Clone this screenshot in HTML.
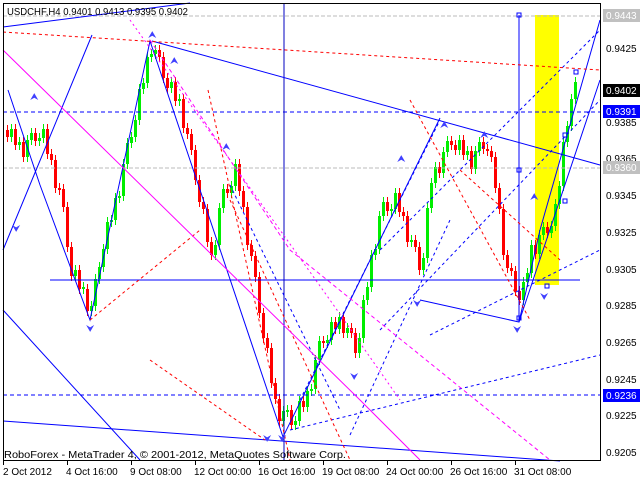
<!DOCTYPE html>
<html><head><meta charset="utf-8"><style>
html,body{margin:0;padding:0;background:#fff;width:640px;height:480px;overflow:hidden}
svg{display:block}
text{font-family:"Liberation Sans",sans-serif;font-size:10px}
</style></head><body>
<svg width="640" height="480" xmlns="http://www.w3.org/2000/svg">
<rect x="0" y="0" width="640" height="480" fill="#fff"/>
<rect x="535" y="15" width="24" height="270" fill="#ffff00"/>
<path fill="none" stroke="#00ee00" d="M11.5 124v18M19.5 137v13M27.5 135v27M31.5 128v17M39.5 133v13M43.5 124v19M75.5 265v16M83.5 282v12M91.5 301v15M95.5 274v37M99.5 262v22M103.5 244v28M107.5 217v37M111.5 215v12M115.5 193v32M119.5 191v12M123.5 159v42M127.5 138v31M131.5 132v16M135.5 115v27M139.5 84v41M143.5 78v16M147.5 52v36M151.5 49v13M155.5 45v14M171.5 77v16M179.5 94v12M215.5 240v20M219.5 203v47M223.5 184v29M231.5 181v17M235.5 159v32M283.5 406v20M287.5 405v12M295.5 416v14M299.5 396v30M307.5 386v26M311.5 384v12M315.5 355v39M319.5 336v29M327.5 335v13M331.5 317v28M339.5 312v22M347.5 323v15M359.5 333v25M363.5 295v48M367.5 282v23M371.5 250v42M375.5 244v16M379.5 211v43M383.5 197v24M391.5 204v12M395.5 188v26M411.5 235v12M423.5 253v22M427.5 203v60M431.5 178v35M435.5 162v26M443.5 147v31M447.5 136v21M459.5 135v20M467.5 146v14M475.5 146v28M479.5 137v19M523.5 277v28M527.5 268v19M531.5 240v38M539.5 230v29M543.5 222v18M551.5 221v17M555.5 199v32M559.5 181v28M563.5 137v54M567.5 121v26M571.5 94v37M575.5 77v27"/>
<path fill="#00ee00" d="M10 129h3v8h-3zM18 142h3v3h-3zM26 140h3v17h-3zM30 133h3v7h-3zM38 138h3v3h-3zM42 129h3v9h-3zM74 270h3v6h-3zM82 287h3v2h-3zM90 306h3v5h-3zM94 279h3v27h-3zM98 267h3v12h-3zM102 249h3v18h-3zM106 222h3v27h-3zM110 220h3v2h-3zM114 198h3v22h-3zM118 196h3v2h-3zM122 164h3v32h-3zM126 143h3v21h-3zM130 137h3v6h-3zM134 120h3v17h-3zM138 89h3v31h-3zM142 83h3v6h-3zM146 57h3v26h-3zM150 54h3v3h-3zM154 50h3v4h-3zM170 82h3v6h-3zM178 99h3v2h-3zM214 245h3v10h-3zM218 208h3v37h-3zM222 189h3v19h-3zM230 186h3v7h-3zM234 164h3v22h-3zM282 411h3v10h-3zM286 410h3v2h-3zM294 421h3v4h-3zM298 401h3v20h-3zM306 391h3v16h-3zM310 389h3v2h-3zM314 360h3v29h-3zM318 341h3v19h-3zM326 340h3v3h-3zM330 322h3v18h-3zM338 317h3v12h-3zM346 328h3v5h-3zM358 338h3v15h-3zM362 300h3v38h-3zM366 287h3v13h-3zM370 255h3v32h-3zM374 249h3v6h-3zM378 216h3v33h-3zM382 202h3v14h-3zM390 209h3v2h-3zM394 193h3v16h-3zM410 240h3v2h-3zM422 258h3v12h-3zM426 208h3v50h-3zM430 183h3v25h-3zM434 167h3v16h-3zM442 152h3v21h-3zM446 141h3v11h-3zM458 140h3v10h-3zM466 151h3v4h-3zM474 151h3v18h-3zM478 142h3v9h-3zM522 282h3v18h-3zM526 273h3v9h-3zM530 245h3v28h-3zM538 235h3v19h-3zM542 227h3v8h-3zM550 226h3v7h-3zM554 204h3v22h-3zM558 186h3v18h-3zM562 142h3v44h-3zM566 126h3v16h-3zM570 99h3v27h-3zM574 82h3v17h-3z"/>
<path fill="none" stroke="#ff0000" d="M7.5 125v17M15.5 124v26M23.5 137v25M35.5 128v18M47.5 124v35M51.5 149v16M55.5 155v38M59.5 183v12M63.5 184v28M67.5 202v50M71.5 242v39M79.5 265v29M87.5 284v32M159.5 45v17M163.5 52v31M167.5 73v20M175.5 77v29M183.5 94v39M187.5 123v16M191.5 129v26M195.5 145v40M199.5 175v32M203.5 197v17M207.5 204v43M211.5 237v23M227.5 184v14M239.5 159v37M243.5 186v26M247.5 202v48M251.5 240v21M255.5 251v31M259.5 272v46M263.5 308v35M267.5 333v20M271.5 343v45M275.5 378v26M279.5 394v32M291.5 405v25M303.5 396v16M323.5 336v12M335.5 317v17M343.5 312v26M351.5 323v15M355.5 328v30M387.5 197v19M399.5 188v29M403.5 207v14M407.5 211v36M415.5 235v17M419.5 242v33M439.5 162v16M451.5 136v14M455.5 140v15M463.5 135v25M471.5 146v28M483.5 137v17M487.5 144v12M491.5 146v16M495.5 152v41M499.5 183v31M503.5 204v56M507.5 250v23M511.5 263v13M515.5 266v30M519.5 286v19M535.5 240v19M547.5 222v16"/>
<path fill="#ff0000" d="M6 130h3v7h-3zM14 129h3v16h-3zM22 142h3v15h-3zM34 133h3v8h-3zM46 129h3v25h-3zM50 154h3v6h-3zM54 160h3v28h-3zM58 188h3v2h-3zM62 189h3v18h-3zM66 207h3v40h-3zM70 247h3v29h-3zM78 270h3v19h-3zM86 289h3v22h-3zM158 50h3v7h-3zM162 57h3v21h-3zM166 78h3v10h-3zM174 82h3v19h-3zM182 99h3v29h-3zM186 128h3v6h-3zM190 134h3v16h-3zM194 150h3v30h-3zM198 180h3v22h-3zM202 202h3v7h-3zM206 209h3v33h-3zM210 242h3v13h-3zM226 189h3v4h-3zM238 164h3v27h-3zM242 191h3v16h-3zM246 207h3v38h-3zM250 245h3v11h-3zM254 256h3v21h-3zM258 277h3v36h-3zM262 313h3v25h-3zM266 338h3v10h-3zM270 348h3v35h-3zM274 383h3v16h-3zM278 399h3v22h-3zM290 410h3v15h-3zM302 401h3v6h-3zM322 341h3v2h-3zM334 322h3v7h-3zM342 317h3v16h-3zM350 328h3v5h-3zM354 333h3v20h-3zM386 202h3v9h-3zM398 193h3v19h-3zM402 212h3v4h-3zM406 216h3v26h-3zM414 240h3v7h-3zM418 247h3v23h-3zM438 167h3v6h-3zM450 141h3v4h-3zM454 145h3v5h-3zM462 140h3v15h-3zM470 151h3v18h-3zM482 142h3v7h-3zM486 149h3v2h-3zM490 151h3v6h-3zM494 157h3v31h-3zM498 188h3v21h-3zM502 209h3v46h-3zM506 255h3v13h-3zM510 268h3v3h-3zM514 271h3v20h-3zM518 291h3v9h-3zM534 245h3v9h-3zM546 227h3v6h-3z"/>
<g fill="none" stroke-width="1">
<line x1="3" y1="16" x2="600" y2="16" stroke="#bbb" stroke-dasharray="4,2"/>
<line x1="3" y1="168" x2="600" y2="168" stroke="#bbb" stroke-dasharray="4,2"/>
<line x1="3" y1="112" x2="600" y2="112" stroke="#0000ff" stroke-dasharray="4,3"/>
<line x1="3" y1="395" x2="600" y2="395" stroke="#0000ff" stroke-dasharray="4,3"/>
<line x1="50" y1="280" x2="580" y2="280" stroke="#0000ff"/>
<line x1="284" y1="3" x2="284" y2="460" stroke="#0000c0"/>
<line x1="519" y1="15" x2="519" y2="322" stroke="#0000ff"/>
<polyline points="3,27 190,3" stroke="#0000ff"/>
<polyline points="152,41 600,165" stroke="#0000ff"/>
<polyline points="3,421 560,461" stroke="#0000ff"/>
<polyline points="8,90 40,185 90,320 150,41 283,437 440,118" stroke="#0000ff"/>
<polyline points="3,250 92,35" stroke="#0000ff"/>
<polyline points="3,310 140,460" stroke="#0000ff"/>
<polyline points="420,300 519,322 540,230 600,20" stroke="#0000ff"/>
<polyline points="519,322 600,80" stroke="#0000ff"/>
<polyline points="300,400 440,120" stroke="#0000ff" stroke-dasharray="3,3"/>
<polyline points="380,250 600,30" stroke="#0000ff" stroke-dasharray="3,3"/>
<polyline points="380,330 600,100" stroke="#0000ff" stroke-dasharray="3,3"/>
<polyline points="430,335 600,250" stroke="#0000ff" stroke-dasharray="3,3"/>
<polyline points="290,430 600,355" stroke="#0000ff" stroke-dasharray="3,3"/>
<polyline points="350,435 450,220" stroke="#0000ff" stroke-dasharray="3,3"/>
<polyline points="230,185 340,410" stroke="#0000ff" stroke-dasharray="3,3"/>
<polyline points="3,32 600,70" stroke="#ff0000" stroke-dasharray="3,3"/>
<polyline points="90,320 200,230" stroke="#ff0000" stroke-dasharray="3,3"/>
<polyline points="150,360 265,440" stroke="#ff0000" stroke-dasharray="3,3"/>
<polyline points="208,90 290,460" stroke="#ff0000" stroke-dasharray="3,3"/>
<polyline points="230,200 350,460" stroke="#ff0000" stroke-dasharray="3,3"/>
<polyline points="410,100 530,320" stroke="#ff0000" stroke-dasharray="3,3"/>
<polyline points="460,170 560,260" stroke="#ff0000" stroke-dasharray="3,3"/>
<polyline points="3,50 360,400 420,460" stroke="#ff00ff"/>
<polyline points="130,20 330,300 400,400" stroke="#ff00ff" stroke-dasharray="2,3"/>
<polyline points="150,40 290,250 550,460" stroke="#ff00ff" stroke-dasharray="4,3"/>
</g>
<g fill="none" stroke="#0000ff">
<rect x="517" y="13" width="4" height="4"/><rect x="517" y="168" width="4" height="4"/><rect x="517" y="316" width="4" height="4"/>
<rect x="563" y="133" width="4" height="4"/><rect x="563" y="199" width="4" height="4"/><rect x="574" y="70" width="4" height="4"/>
<rect x="545" y="284" width="4" height="4"/>
</g>
<g fill="#4040ff" font-size="10">
<text x="148" y="38">⮝</text><text x="30" y="100">⮝</text><text x="170" y="64">⮝</text><text x="222" y="150">⮝</text>
<text x="480" y="138">⮝</text><text x="440" y="128">⮝</text><text x="397" y="162">⮝</text><text x="530" y="200">⮝</text>
<text x="12" y="232">⮟</text><text x="86" y="332">⮟</text><text x="263" y="442">⮟</text><text x="278" y="442">⮟</text>
<text x="413" y="307">⮟</text><text x="513" y="333">⮟</text><text x="540" y="300">⮟</text><text x="350" y="380">⮟</text>
</g>
<rect x="3.5" y="3.5" width="597" height="457" fill="none" stroke="#000"/>
<text x="7" y="15" fill="#000" font-size="11" textLength="181" lengthAdjust="spacingAndGlyphs">USDCHF,H4  0.9401 0.9413 0.9395 0.9402</text>
<text x="4" y="458" fill="#000" font-size="11" textLength="342" lengthAdjust="spacingAndGlyphs">RoboForex - MetaTrader 4, © 2001-2012, MetaQuotes Software Corp.</text>
<g fill="#000">
<text x="606" y="52">0.9425</text><text x="606" y="126">0.9385</text>
<text x="606" y="162">0.9365</text><text x="606" y="199">0.9345</text><text x="606" y="236">0.9325</text>
<text x="606" y="273">0.9305</text><text x="606" y="309">0.9285</text><text x="606" y="346">0.9265</text>
<text x="606" y="383">0.9245</text><text x="606" y="419">0.9225</text><text x="606" y="456">0.9205</text>
</g>
<rect x="603" y="9" width="37" height="13" fill="#c0c0c0"/><text x="606" y="19" fill="#fff">0.9443</text>
<rect x="603" y="84" width="37" height="13" fill="#000"/><text x="606" y="94" fill="#fff">0.9402</text>
<rect x="603" y="105" width="37" height="13" fill="#0000ff"/><text x="606" y="115" fill="#fff">0.9391</text>
<rect x="603" y="161" width="37" height="13" fill="#c0c0c0"/><text x="606" y="171" fill="#fff">0.9360</text>
<rect x="603" y="389" width="37" height="13" fill="#0000ff"/><text x="606" y="399" fill="#fff">0.9236</text>
<path stroke="#000" d="M3.5 461v4M67.5 461v4M131.5 461v4M195.5 461v4M259.5 461v4M323.5 461v4M387.5 461v4M451.5 461v4M515.5 461v4"/>
<g fill="#000">
<text x="3" y="475">2 Oct 2012</text><text x="66" y="475">4 Oct 16:00</text><text x="130" y="475">9 Oct 08:00</text>
<text x="194" y="475">12 Oct 00:00</text><text x="258" y="475">16 Oct 16:00</text><text x="322" y="475">19 Oct 08:00</text>
<text x="386" y="475">24 Oct 00:00</text><text x="450" y="475">26 Oct 16:00</text><text x="514" y="475">31 Oct 08:00</text>
</g>
</svg>
</body></html>
